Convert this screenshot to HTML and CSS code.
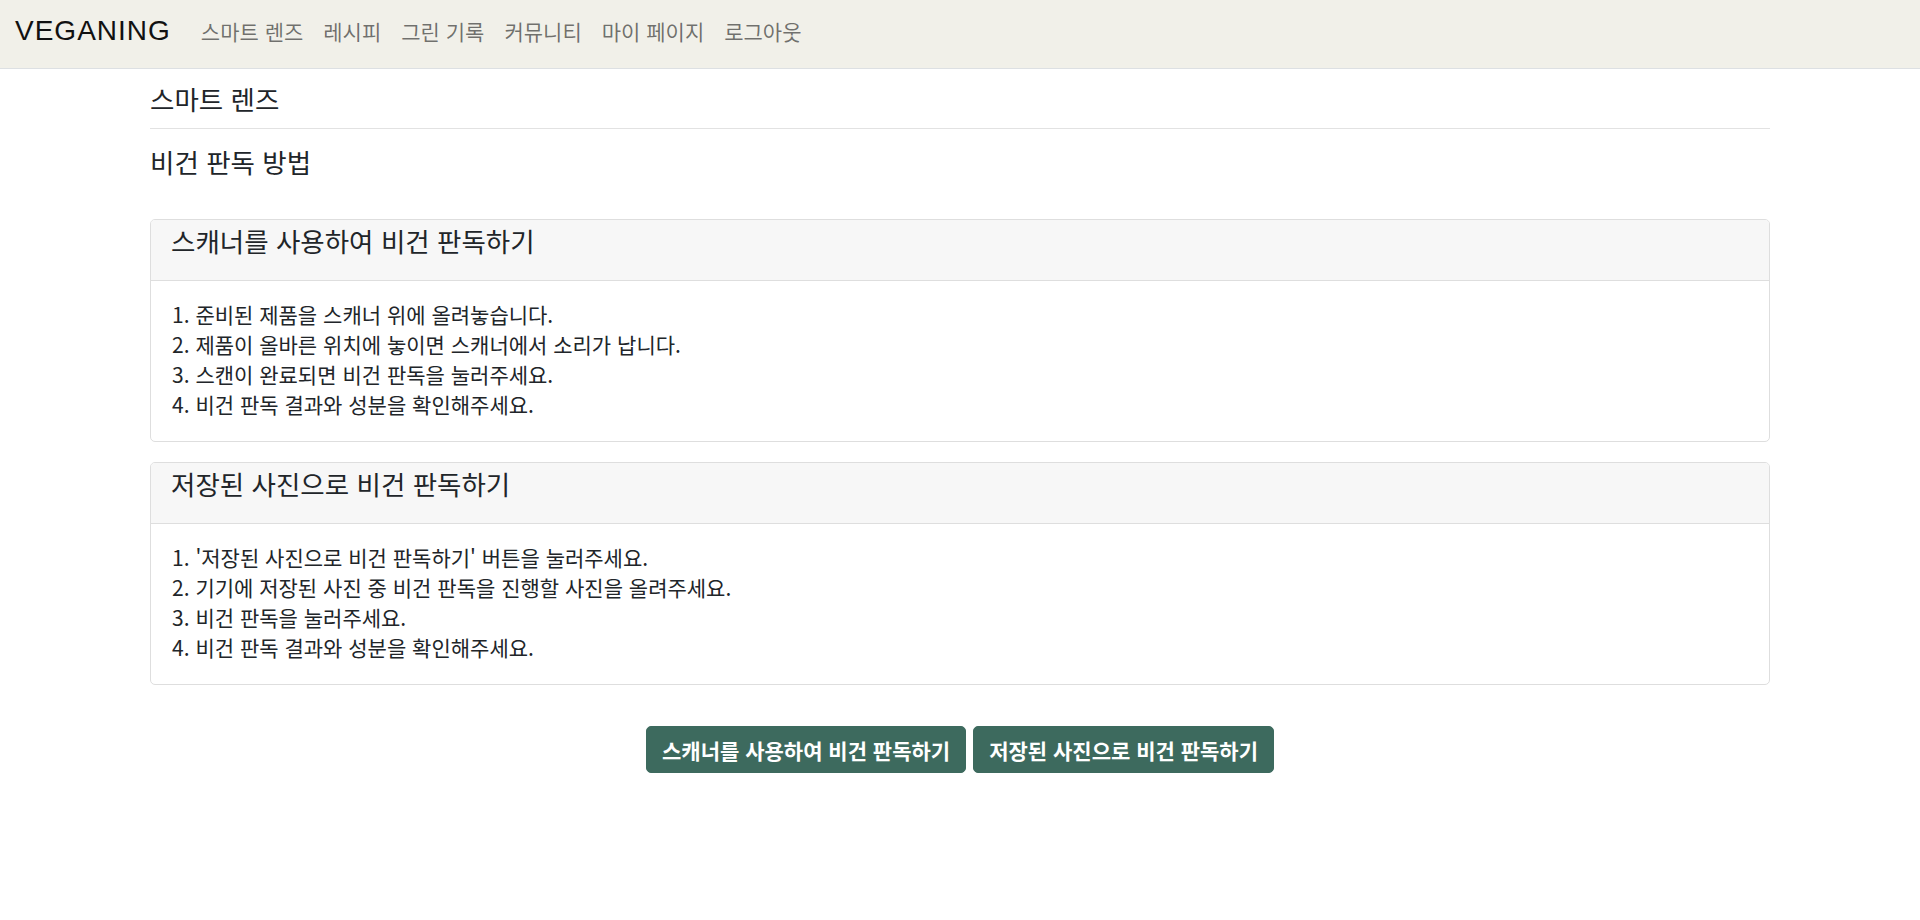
FILE: index.html
```html
<!DOCTYPE html>
<html lang="ko">
<head>
<meta charset="utf-8">
<title>VEGANING - 스마트 렌즈</title>
<link rel="stylesheet" href="styles.css">
</head>
<body>
<nav class="navbar">
  <a class="brand" href="#">VEGANING</a>
  <ul class="nav">
    <li><a class="nav-link" href="#">스마트 렌즈</a></li>
    <li><a class="nav-link" href="#">레시피</a></li>
    <li><a class="nav-link" href="#">그린 기록</a></li>
    <li><a class="nav-link" href="#">커뮤니티</a></li>
    <li><a class="nav-link" href="#">마이 페이지</a></li>
    <li><a class="nav-link" href="#">로그아웃</a></li>
  </ul>
</nav>
<main class="container">
  <h5 class="page-title">스마트 렌즈</h5>
  <hr class="divider">
  <h5 class="section-title">비건 판독 방법</h5>

  <div class="card">
    <div class="card-header"><h5 class="card-title">스캐너를 사용하여 비건 판독하기</h5></div>
    <div class="card-body">
      <p class="card-text">1. 준비된 제품을 스캐너 위에 올려놓습니다.<br>2. 제품이 올바른 위치에 놓이면 스캐너에서 소리가 납니다.<br>3. 스캔이 완료되면 비건 판독을 눌러주세요.<br>4. 비건 판독 결과와 성분을 확인해주세요.</p>
    </div>
  </div>

  <div class="card">
    <div class="card-header"><h5 class="card-title">저장된 사진으로 비건 판독하기</h5></div>
    <div class="card-body">
      <p class="card-text">1. '저장된 사진으로 비건 판독하기' 버튼을 눌러주세요.<br>2. 기기에 저장된 사진 중 비건 판독을 진행할 사진을 올려주세요.<br>3. 비건 판독을 눌러주세요.<br>4. 비건 판독 결과와 성분을 확인해주세요.</p>
    </div>
  </div>

  <div class="actions">
    <button class="btn" type="button">스캐너를 사용하여 비건 판독하기</button>
    <button class="btn" type="button">저장된 사진으로 비건 판독하기</button>
  </div>
</main>
</body>
</html>
```
FILE: styles.css
```css
* { box-sizing: border-box; }

body {
  margin: 0;
  font-family: "Noto Sans CJK KR", "Noto Sans", sans-serif;
  font-size: 21px;
  line-height: 30px;
  color: #212529;
  background: #fff;
}

.navbar {
  display: flex;
  align-items: center;
  height: 69px;
  padding: 0 15px 7px;
  background: #f1f0e9;
  border-bottom: 1px solid #dde0e3;
}

.brand {
  font-family: "Liberation Sans", Arial, sans-serif;
  font-size: 28px;
  letter-spacing: 1px;
  line-height: 1;
  color: #111;
  text-decoration: none;
  margin-right: 20px;
}

.nav {
  display: flex;
  list-style: none;
  margin: 0;
  padding: 0;
}

.nav-link {
  display: block;
  padding: 0 10px;
  color: rgba(0, 0, 0, 0.55);
  text-decoration: none;
  line-height: 30px;
}

.container {
  width: 1620px;
  margin: 0 auto;
}

h5 {
  font-size: 26.5px;
  font-weight: 400;
  line-height: 30px;
  margin: 0;
}

.page-title {
  margin-top: 15px;
}

.divider {
  border: 0;
  border-top: 1px solid #e2e2e2;
  margin: 14px 0 18px;
}

.section-title {
  margin-bottom: 42px;
}

.card {
  border: 1px solid #dedede;
  border-radius: 5px;
  margin-bottom: 20px;
  overflow: hidden;
}

.card-header {
  padding: 6px 20px 10px;
  background: #f7f7f7;
  border-bottom: 1px solid #dedede;
}

.card-title {
  margin-bottom: 14px;
}

.card-body {
  padding: 18px 21px 22px;
}

.card-text {
  margin: 0;
  line-height: 30px;
}

.actions {
  display: flex;
  justify-content: center;
  gap: 7px;
  margin-top: 41px;
}

.btn {
  font-family: inherit;
  font-size: 21px;
  font-weight: 700;
  line-height: 30px;
  color: #fff;
  background: #3d6a5e;
  border: 1px solid #3d6a5e;
  border-radius: 5px;
  padding: 7.5px 15px;
}
```
